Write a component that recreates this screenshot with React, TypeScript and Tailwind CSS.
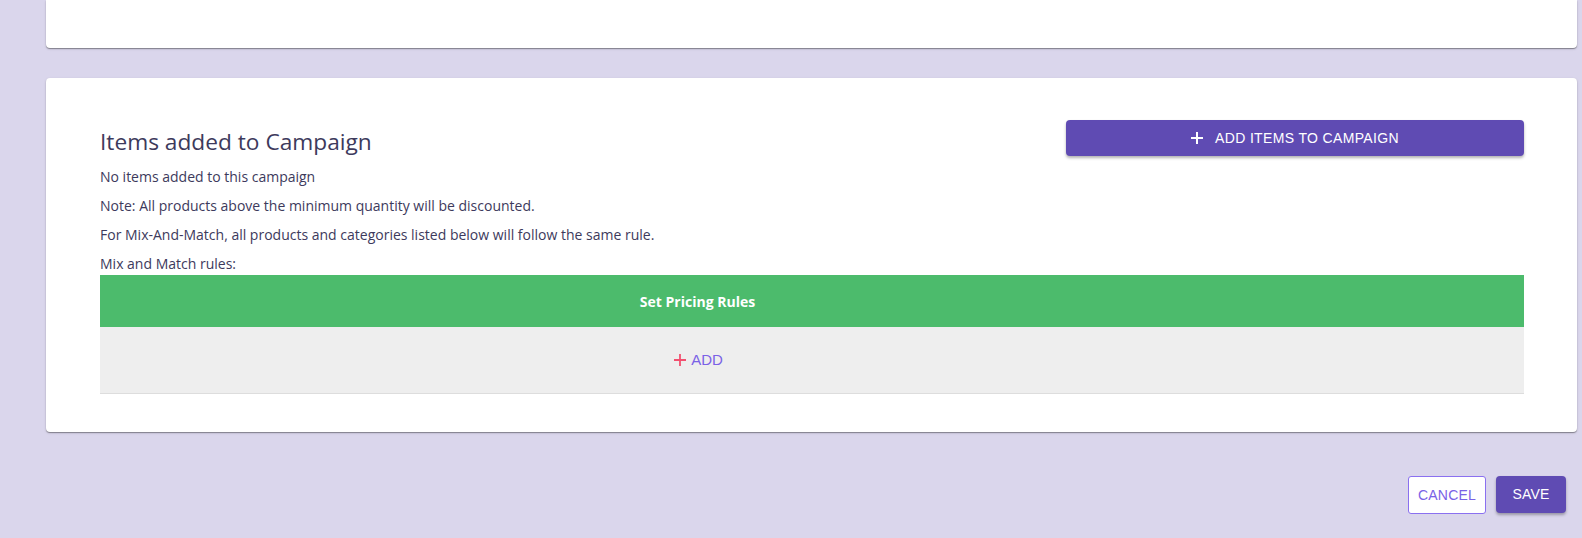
export default function App() {
  return (
    <div className="min-h-[538px] bg-[#dad6ec] pl-[46px] pr-[5px] font-['Open_Sans',sans-serif]">
      {/* previous card, only its bottom edge is in view */}
      <div className="h-[48px] rounded-b-[4px] bg-white shadow-[0_1px_1px_rgba(0,0,0,0.35),0_1px_3px_rgba(0,0,0,0.12)]" />

      <section className="mt-[30px] rounded-[4px] bg-white pl-[54px] pr-[53px] pt-[42px] pb-[38px] shadow-[0_1px_1px_rgba(0,0,0,0.35),0_1px_3px_rgba(0,0,0,0.12)]">
        <div className="flex items-start justify-between">
          <div className="text-[#3d3a5c]">
            <h2 className="mt-[6px] text-[22.7px] leading-[32px] font-normal">Items added to Campaign</h2>
            <p className="mt-[9px] text-[14px] leading-[20px]">No items added to this campaign</p>
            <p className="mt-[9px] text-[14px] leading-[20px]">
              Note: All products above the minimum quantity will be discounted.
            </p>
            <p className="mt-[9px] text-[14px] leading-[20px]">
              For Mix-And-Match, all products and categories listed below will follow the same rule.
            </p>
            <p className="mt-[9px] text-[14px] leading-[20px]">Mix and Match rules:</p>
          </div>
          <button className="flex h-[36px] w-[458px] items-center justify-center gap-[12px] rounded-[4px] bg-[#5f4bb3] font-['Liberation_Sans',sans-serif] text-[14px] tracking-[0.35px] text-white shadow-[0_2px_3px_rgba(0,0,0,0.3)]">
            <svg width="12" height="12" viewBox="0 0 12 12" fill="none" stroke="currentColor" strokeWidth="2">
              <path d="M6 0v12M0 6h12" />
            </svg>
            ADD ITEMS TO CAMPAIGN
          </button>
        </div>

        <div className="mt-[1px] grid grid-cols-[1195px_1fr]">
          <div className="flex h-[52px] items-center justify-center bg-[#4cbb6c] text-[14px] font-bold text-white">
            Set Pricing Rules
          </div>
          <div className="h-[52px] bg-[#4cbb6c]" />
          <div className="flex h-[67px] items-center justify-center border-b border-[#dddddd] bg-[#eeeeee] pl-[2px] font-['Liberation_Sans',sans-serif] text-[15px]">
            <button className="flex items-center gap-[5px] text-[#7a62e6]">
              <svg width="12" height="12" viewBox="0 0 12 12" fill="none" stroke="#f2506f" strokeWidth="1.8">
                <path d="M6 0v12M0 6h12" />
              </svg>
              ADD
            </button>
          </div>
          <div className="h-[67px] border-b border-[#dddddd] bg-[#eeeeee]" />
        </div>
      </section>

      <div className="mt-[44px] mr-[11px] flex justify-end gap-[10px] font-['Liberation_Sans',sans-serif] text-[14px] tracking-[0.2px]">
        <button className="h-[38px] w-[78px] rounded-[3px] border border-[#8a70f0] bg-white text-[#7a62e6]">
          CANCEL
        </button>
        <button className="h-[37px] w-[70px] rounded-[4px] bg-[#5f4bb3] text-white shadow-[0_2px_3px_rgba(0,0,0,0.3)]">
          SAVE
        </button>
      </div>
    </div>
  );
}
